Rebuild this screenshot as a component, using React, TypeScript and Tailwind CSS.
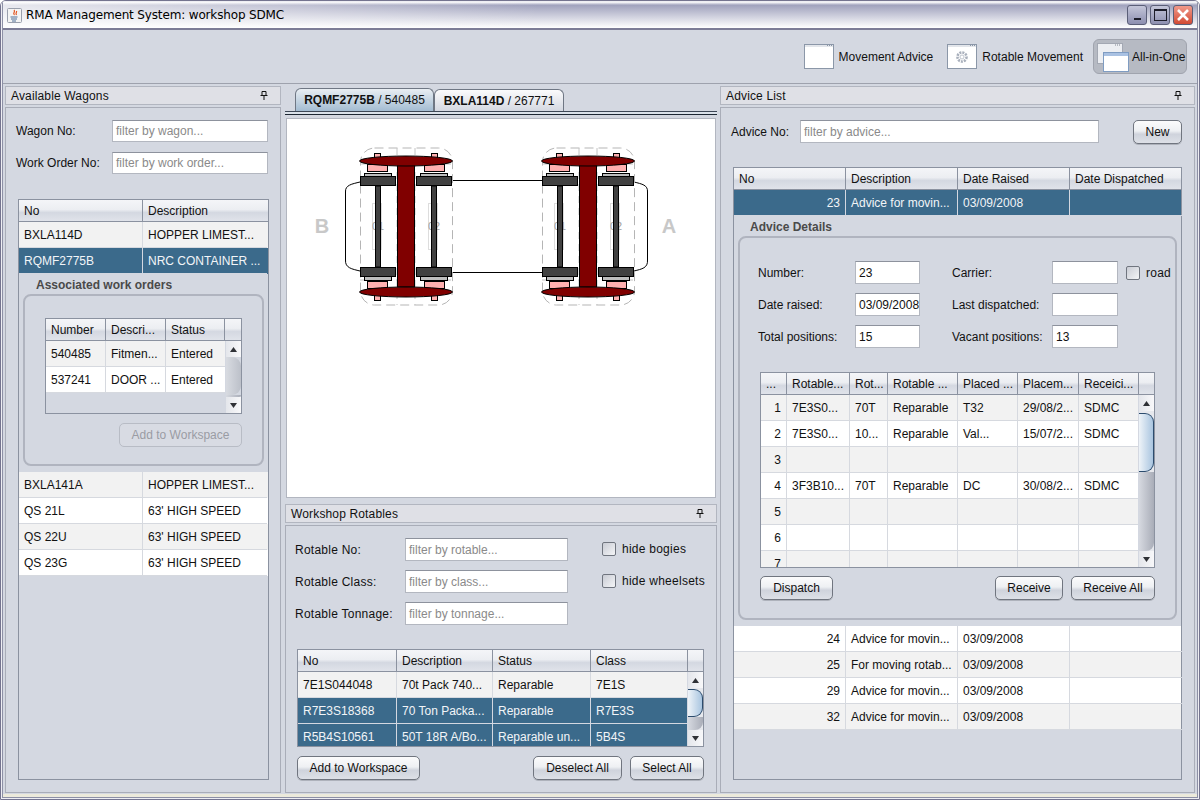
import type { ReactNode } from 'react'

const LIGHT = 'bg-[#f2f2f2]'
const headerBg = 'bg-[linear-gradient(#f4f5f8_0%,#eceef2_45%,#d4d8e1_60%,#e0e3ea_100%)]'
const buttonBg = 'bg-[linear-gradient(#fbfbfc_0%,#eef0f3_45%,#cfd3dc_60%,#dde0e7_100%)]'

type Kind = 'light' | 'white' | 'selected'

function Cells({ cols, cells, kind, height = 'h-[26px]', numeric }: { cols: string; cells: string[]; kind: Kind; height?: string; numeric?: boolean }) {
  const bg = kind === 'selected' ? 'bg-[#3b6a8b] text-[#f2f5f8]' : kind === 'light' ? LIGHT : 'bg-white'
  const line = kind === 'selected' ? 'border-[#d4d8e1]' : 'border-[#d6d9df]'
  return (
    <div className={`grid shrink-0 ${cols} ${height} ${bg}`}>
      {cells.map((cell, i) => (
        <div
          key={i}
          className={`flex h-[26px] items-center overflow-hidden whitespace-nowrap border-b border-r px-[5px] last:border-r-0 ${line} ${numeric && i === 0 ? 'justify-end' : ''}`}
        >
          {cell}
        </div>
      ))}
    </div>
  )
}

function Header({ cols, labels, scrollCorner }: { cols: string; labels: string[]; scrollCorner?: boolean }) {
  return (
    <div className={`grid h-[22px] shrink-0 border-b border-[#8b92a0] ${cols} ${headerBg}`}>
      {labels.map((label, i) => (
        <div key={i} className="flex items-center overflow-hidden whitespace-nowrap border-r border-[#8b92a0] px-[5px] last:border-r-0">
          {label}
        </div>
      ))}
      {scrollCorner && <div />}
    </div>
  )
}

function Arrow({ up }: { up?: boolean }) {
  return (
    <div className="flex h-[16px] shrink-0 items-center justify-center bg-[linear-gradient(90deg,#e4e6eb,#f8f8fa)]">
      <svg width="9" height="7" viewBox="0 0 9 7">
        <path d={up ? 'M4.5 1 L8 6 L1 6 Z' : 'M1 1 L8 1 L4.5 6 Z'} fill="#2f3136" />
      </svg>
    </div>
  )
}

function ScrollBar({ offset, thumb, track }: { offset: string; thumb: string; track: string }) {
  return (
    <div className={`flex w-[16px] shrink-0 flex-col border-l border-[#d4d8e1] ${track}`}>
      <Arrow up />
      <div className={offset} />
      <div className={thumb} />
      <div className="flex-1 rounded-br-[8px] bg-[linear-gradient(90deg,#d6d9e0,#a9adb8)]" />
      <Arrow />
    </div>
  )
}

const blueThumb = 'shrink-0 rounded-r-[9px] border-y border-r border-[#2c4c6e] bg-[linear-gradient(90deg,#eef3f8,#a9c5e0)]'
const greyThumb = 'shrink-0 rounded-r-[9px] bg-[linear-gradient(90deg,#d8dbe1,#bcc0c9)]'

function Field({ placeholder, value, width = 'w-[156px]', height = 'h-[22px]' }: { placeholder?: string; value?: string; width?: string; height?: string }) {
  return (
    <div className={`flex shrink-0 items-center overflow-hidden whitespace-nowrap border border-[#b3b7c0] border-t-[#8d929d] bg-white px-[3px] ${width} ${height} ${placeholder ? 'text-[#8a8a8a]' : ''}`}>
      {placeholder ?? value}
    </div>
  )
}

function Button({ children, width, disabled }: { children: ReactNode; width: string; disabled?: boolean }) {
  return (
    <div
      className={`flex h-[24px] shrink-0 items-center justify-center rounded-[5px] border ${width} ${
        disabled
          ? 'border-[#b8bcc5] bg-[#d8dbe3] text-[#9a9ca3]'
          : `border-[#70757f] shadow-[0_1px_0_#aeb2bb] ${buttonBg}`
      }`}
    >
      {children}
    </div>
  )
}

function DockTitle({ title }: { title: string }) {
  return (
    <div className="flex h-[19px] shrink-0 items-center justify-between border border-[#b2b6c0] bg-[#dfe0e6] pl-[5px] pr-[12px]">
      <span className="tracking-[0.15px]">{title}</span>
      <svg width="8" height="9" viewBox="0 0 8 9">
        <path d="M2 0.5 H6 V4.5 H2 Z M0.5 4.5 H7.5 M4 4.5 V9" fill="none" stroke="#111" />
      </svg>
    </div>
  )
}

function CheckBox({ label, className }: { label: string; className: string }) {
  return (
    <div className={`flex items-center ${className}`}>
      <div className="h-[14px] w-[14px] shrink-0 rounded-[2px] border border-[#70757f] bg-[linear-gradient(135deg,#c9ccd4,#f4f5f7)]" />
      <span className="ml-[6px] whitespace-nowrap tracking-[0.25px]">{label}</span>
    </div>
  )
}

function WindowIcon({ children }: { children?: ReactNode }) {
  return (
    <svg width="30" height="26" viewBox="0 0 30 26" className="shrink-0">
      <rect x="0.5" y="0.5" width="29" height="24" fill="#fff" stroke="#8b97a8" />
      <path d="M1 2 H29" stroke="#c6ccd6" />
      <path d="M23 1.5 H28" stroke="#8b97a8" strokeDasharray="1 1" />
      {children}
    </svg>
  )
}

function AllInOneIcon() {
  return (
    <svg width="33" height="32" viewBox="0 0 33 32" className="shrink-0">
      <rect x="1.5" y="2.5" width="25" height="20" fill="#eceef2" stroke="#a3a8b3" />
      <path d="M19 4 H24" stroke="#7e8490" strokeDasharray="1 1" />
      <rect x="7.5" y="11.5" width="25" height="19" fill="#fff" stroke="#7f9cc2" />
      <rect x="8" y="12" width="24" height="3" fill="#a9c1e2" />
    </svg>
  )
}

// absolute x of each part of the two wheelsets, left bogie
const wheelsets = [
  { label: '01', small: 374, wide: 367, grey: 364, box: 360, axle: 375 },
  { label: '02', small: 431, wide: 424, grey: 420, box: 416, axle: 431 },
]

function Bogie({ x }: { x: number }) {
  const dark = '#414141'
  const stroke = { stroke: '#000', strokeWidth: 1 }
  return (
    <g transform={`translate(${x} 0)`}>
      <rect x="360.5" y="148" width="92" height="157" rx="14" fill="none" stroke="#b5b5b5" strokeDasharray="9 5" />
      <path d="M360 164 H452 M360 280 H452 M397 148 V305 M415 148 V305" fill="none" stroke="#c4c4c4" strokeDasharray="7 5" />
      {wheelsets.map((w) => (
        <g key={w.label}>
          <rect x={w.small + 0.5} y="153.5" width="6" height="6" fill="#ffb0b0" {...stroke} />
          <rect x={w.small + 0.5} y="294.5" width="6" height="6" fill="#ffb0b0" {...stroke} />
          <rect x={w.wide + 0.5} y="164.5" width="20" height="7" fill="#ffb0b0" {...stroke} />
          <rect x={w.wide + 0.5} y="281.5" width="20" height="7" fill="#ffb0b0" {...stroke} />
          <rect x={w.grey + 0.5} y="173.5" width="27" height="3" fill="#bdbdbd" {...stroke} />
          <rect x={w.grey + 0.5} y="276.5" width="27" height="4" fill="#bdbdbd" {...stroke} />
          <rect x={w.axle - 2.5} y="203.5" width="9" height="46" fill="none" stroke="#bbb" strokeDasharray="1 1" />
          <text x={w.axle + 3} y="230" textAnchor="middle" fontSize="11" fill="#a0a0a0" fontFamily="Liberation Sans">
            {w.label}
          </text>
          <rect x={w.box + 0.5} y="176.5" width="35" height="9" fill={dark} {...stroke} />
          <rect x={w.box + 0.5} y="267.5" width="35" height="9" fill={dark} {...stroke} />
          <rect x={w.axle + 0.5} y="186" width="5" height="81" fill={dark} {...stroke} />
        </g>
      ))}
      <rect x="397.5" y="163" width="17" height="124" fill="#800000" {...stroke} />
      <ellipse cx="406" cy="161" rx="46.5" ry="5" fill="#800000" {...stroke} />
      <ellipse cx="406" cy="292" rx="46.5" ry="5" fill="#800000" {...stroke} />
    </g>
  )
}

function WagonDrawing() {
  return (
    <svg viewBox="287 119 428 378" className="h-full w-full">
      <path d="M452 180.5 H542 M452 272.5 H542" stroke="#000" fill="none" />
      <path d="M360 182 C352 184 345 185 345.5 192 V260 C345 268 352 269 360 271" stroke="#000" fill="none" />
      <path d="M634 182 C642 184 648 185 647.5 192 V260 C648 268 642 269 634 271" stroke="#000" fill="none" />
      <Bogie x={0} />
      <Bogie x={182} />
      <text x="322" y="233" textAnchor="middle" fontSize="20" fontWeight="700" fill="#c8c8c8" fontFamily="Liberation Sans">B</text>
      <text x="669" y="233" textAnchor="middle" fontSize="20" fontWeight="700" fill="#c8c8c8" fontFamily="Liberation Sans">A</text>
    </svg>
  )
}

function GroupLabel({ children, className }: { children: string; className: string }) {
  return <div className={`flex h-[20px] items-center pt-[1px] font-bold text-[#4a4a4a] ${className}`}>{children}</div>
}

function AvailableWagons() {
  const cols = 'grid-cols-[124px_124px]'
  const inner = 'grid-cols-[60px_60px_59px]'
  return (
    <section className="flex w-[276px] shrink-0 flex-col gap-[2px]">
      <DockTitle title="Available Wagons" />
      <div className="flex flex-1 flex-col border border-[#a9adb8] pb-[12px] pl-[10px] pr-[11px] pt-[12px]">
        <div className="flex items-center">
          <span className="w-[96px]">Wagon No:</span>
          <Field placeholder="filter by wagon..." />
        </div>
        <div className="mt-[10px] flex items-center">
          <span className="w-[96px]">Work Order No:</span>
          <Field placeholder="filter by work order..." />
        </div>
        <div className="ml-[2px] mt-[25px] flex flex-1 flex-col border border-[#8b92a0]">
          <Header cols={cols} labels={['No', 'Description']} />
          <Cells cols={cols} cells={['BXLA114D', 'HOPPER LIMEST...']} kind="light" />
          <Cells cols={cols} cells={['RQMF2775B', 'NRC CONTAINER ...']} kind="selected" />
          <div className="mx-[4px] flex h-[198px] shrink-0 flex-col pb-[6px]">
            <GroupLabel className="pl-[13px]">Associated work orders</GroupLabel>
            <div className="flex flex-1 flex-col rounded-[8px] border-2 border-[#b0b4bf] pl-[20px] pr-[20px] pt-[22px]">
              <div className="flex h-[96px] shrink-0 flex-col border border-[#8b92a0]">
                <Header cols="grid-cols-[60px_60px_59px_1fr]" labels={['Number', 'Descri...', 'Status']} scrollCorner />
                <div className="flex min-h-0 flex-1">
                  <div className="flex-1">
                    <Cells cols={inner} cells={['540485', 'Fitmen...', 'Entered']} kind="light" />
                    <Cells cols={inner} cells={['537241', 'DOOR ...', 'Entered']} kind="white" />
                  </div>
                  <ScrollBar offset="h-0" thumb={`h-[38px] ${greyThumb}`} track="bg-[#d4d8e1]" />
                </div>
              </div>
              <div className="mt-[9px] flex justify-end">
                <Button width="w-[123px]" disabled>Add to Workspace</Button>
              </div>
            </div>
          </div>
          <Cells cols={cols} cells={['BXLA141A', 'HOPPER LIMEST...']} kind="light" />
          <Cells cols={cols} cells={['QS  21L', "63' HIGH SPEED"]} kind="white" />
          <Cells cols={cols} cells={['QS  22U', "63' HIGH SPEED"]} kind="light" />
          <Cells cols={cols} cells={['QS  23G', "63' HIGH SPEED"]} kind="white" />
        </div>
      </div>
    </section>
  )
}

function WagonTabs() {
  return (
    <div className="flex h-[414px] shrink-0 flex-col">
      <div className="flex h-[26px] shrink-0 items-end border-b border-[#3d4756] pl-[10px]">
        <div className="flex h-[23px] w-[139px] items-center justify-center rounded-t-[6px] border border-b-0 border-[#6f7784] bg-[linear-gradient(#e9eef3,#a3bcd2)]">
          <b>RQMF2775B</b>&nbsp;/ 540485
        </div>
        <div className="flex h-[22px] w-[130px] items-center justify-center rounded-t-[6px] border border-b-0 border-[#6f7784] bg-[linear-gradient(#fbfbfc,#d4d8e1)]">
          <b>BXLA114D</b>&nbsp;/ 267771
        </div>
      </div>
      <div className="h-[3px] shrink-0 border-b border-[#1d2733] bg-[#dbe2ea]" />
      <div className="mx-[1px] mt-[3px] h-[380px] shrink-0 border border-[#b2b6c0] bg-white">
        <WagonDrawing />
      </div>
    </div>
  )
}

function WorkshopRotables() {
  const cols = 'grid-cols-[99px_96px_98px_97px]'
  return (
    <section className="flex flex-1 flex-col gap-[2px]">
      <DockTitle title="Workshop Rotables" />
      <div className="flex flex-1 flex-col border border-[#a9adb8] pb-[12px] pl-[9px] pr-[12px] pt-[12px]">
        <div className="flex">
          <div className="flex w-[273px] flex-col gap-[9px]">
            <div className="flex items-center"><span className="w-[110px] tracking-[0.25px]">Rotable No:</span><Field placeholder="filter by rotable..." width="w-[163px]" height="h-[23px]" /></div>
            <div className="flex items-center"><span className="w-[110px] tracking-[0.25px]">Rotable Class:</span><Field placeholder="filter by class..." width="w-[163px]" height="h-[23px]" /></div>
            <div className="flex items-center"><span className="w-[110px] tracking-[0.25px]">Rotable Tonnage:</span><Field placeholder="filter by tonnage..." width="w-[163px]" height="h-[23px]" /></div>
          </div>
          <div className="ml-[34px] flex flex-col gap-[18px] pt-[4px]">
            <CheckBox label="hide bogies" className="h-[14px]" />
            <CheckBox label="hide wheelsets" className="h-[14px]" />
          </div>
        </div>
        <div className="ml-[2px] mt-[24px] flex h-[98px] shrink-0 flex-col overflow-hidden border border-[#8b92a0]">
          <Header cols="grid-cols-[99px_96px_98px_97px_1fr]" labels={['No', 'Description', 'Status', 'Class']} scrollCorner />
          <div className="flex min-h-0 flex-1">
            <div className="min-w-0 flex-1 overflow-hidden">
              <Cells cols={cols} cells={['7E1S044048', '70t Pack 740...', 'Reparable', '7E1S']} kind="light" />
              <Cells cols={cols} cells={['R7E3S18368', '70 Ton Packa...', 'Reparable', 'R7E3S']} kind="selected" />
              <Cells cols={cols} cells={['R5B4S10561', '50T 18R A/Bo...', 'Reparable un...', '5B4S']} kind="selected" height="h-[23px]" />
            </div>
            <ScrollBar offset="h-[1px]" thumb={`h-[28px] ${blueThumb}`} track="bg-[#e6e8ed]" />
          </div>
        </div>
        <div className="ml-[2px] mt-[9px] flex items-center">
          <Button width="w-[123px]">Add to Workspace</Button>
          <div className="flex-1" />
          <Button width="w-[89px]">Deselect All</Button>
          <div className="w-[8px]" />
          <Button width="w-[74px]">Select All</Button>
        </div>
      </div>
    </section>
  )
}

function AdviceDetails() {
  const inner = 'grid-cols-[26px_63px_38px_70px_60px_61px_60px]'
  const row = (n: string, a = '', b = '', c = '', d = '', e = '', f = '') => [n, a, b, c, d, e, f]
  return (
    <div className="mx-[4px] flex h-[410px] shrink-0 flex-col pb-[6px]">
      <GroupLabel className="pl-[12px]">Advice Details</GroupLabel>
      <div className="flex flex-1 flex-col rounded-[8px] border-2 border-[#b0b4bf] pl-[18px] pr-[5px] pt-[23px]">
        <div className="flex flex-col gap-[9px]">
          <div className="flex items-center">
            <span className="w-[97px] shrink-0">Number:</span>
            <Field value="23" width="w-[65px]" height="h-[23px]" />
            <span className="ml-[32px] w-[100px] shrink-0">Carrier:</span>
            <Field value="" width="w-[66px]" height="h-[23px]" />
            <CheckBox label="road" className="ml-[8px]" />
          </div>
          <div className="flex items-center">
            <span className="w-[97px] shrink-0">Date raised:</span>
            <Field value="03/09/2008" width="w-[65px]" height="h-[23px]" />
            <span className="ml-[32px] w-[100px] shrink-0">Last dispatched:</span>
            <Field value="" width="w-[66px]" height="h-[23px]" />
          </div>
          <div className="flex items-center">
            <span className="w-[97px] shrink-0">Total positions:</span>
            <Field value="15" width="w-[65px]" height="h-[23px]" />
            <span className="ml-[32px] w-[100px] shrink-0">Vacant positions:</span>
            <Field value="13" width="w-[66px]" height="h-[23px]" />
          </div>
        </div>
        <div className="ml-[2px] mt-[24px] flex h-[196px] w-[395px] shrink-0 flex-col overflow-hidden border border-[#8b92a0]">
          <Header cols="grid-cols-[26px_63px_38px_70px_60px_61px_60px_1fr]" labels={['...', 'Rotable...', 'Rot...', 'Rotable ...', 'Placed ...', 'Placem...', 'Receici...']} scrollCorner />
          <div className="flex min-h-0 flex-1">
            <div className="min-w-0 flex-1 overflow-hidden">
              <Cells cols={inner} cells={row('1', '7E3S0...', '70T', 'Reparable', 'T32', '29/08/2...', 'SDMC')} kind="light" numeric />
              <Cells cols={inner} cells={row('2', '7E3S0...', '10...', 'Reparable', 'Val...', '15/07/2...', 'SDMC')} kind="white" numeric />
              <Cells cols={inner} cells={row('3')} kind="light" numeric />
              <Cells cols={inner} cells={row('4', '3F3B10...', '70T', 'Reparable', 'DC', '30/08/2...', 'SDMC')} kind="white" numeric />
              <Cells cols={inner} cells={row('5')} kind="light" numeric />
              <Cells cols={inner} cells={row('6')} kind="white" numeric />
              <Cells cols={inner} cells={row('7')} kind="light" numeric />
            </div>
            <ScrollBar offset="h-[2px]" thumb={`h-[59px] ${blueThumb}`} track="bg-[#e6e8ed]" />
          </div>
        </div>
        <div className="ml-[2px] mt-[8px] flex w-[395px] items-center">
          <Button width="w-[73px]">Dispatch</Button>
          <div className="flex-1" />
          <Button width="w-[68px]">Receive</Button>
          <div className="w-[8px]" />
          <Button width="w-[84px]">Receive All</Button>
        </div>
      </div>
    </div>
  )
}

function AdviceList() {
  const cols = 'grid-cols-[112px_112px_112px_112px]'
  return (
    <section className="ml-[3px] flex w-[475px] shrink-0 flex-col gap-[2px]">
      <DockTitle title="Advice List" />
      <div className="flex flex-1 flex-col border border-[#a9adb8] pb-[12px] pl-[10px] pr-[12px] pt-[12px]">
        <div className="flex items-start">
          <span className="w-[69px] self-center">Advice No:</span>
          <Field placeholder="filter by advice..." width="w-[299px]" height="h-[23px]" />
          <div className="flex-1" />
          <Button width="w-[49px]">New</Button>
        </div>
        <div className="ml-[2px] mt-[23px] flex flex-1 flex-col border border-[#8b92a0]">
          <Header cols={cols} labels={['No', 'Description', 'Date Raised', 'Date Dispatched']} />
          <Cells cols={cols} cells={['23', 'Advice for movin...', '03/09/2008', '']} kind="selected" numeric />
          <AdviceDetails />
          <Cells cols={cols} cells={['24', 'Advice for movin...', '03/09/2008', '']} kind="white" numeric />
          <Cells cols={cols} cells={['25', 'For moving rotab...', '03/09/2008', '']} kind="light" numeric />
          <Cells cols={cols} cells={['29', 'Advice for movin...', '03/09/2008', '']} kind="white" numeric />
          <Cells cols={cols} cells={['32', 'Advice for movin...', '03/09/2008', '']} kind="light" numeric />
        </div>
      </div>
    </section>
  )
}

function WindowButton({ children, className }: { children: ReactNode; className: string }) {
  return <div className={`flex h-[20px] w-[20px] items-center justify-center rounded-[3px] border border-[#5b5f78] ${className}`}>{children}</div>
}

function TitleBar() {
  return (
    <div className="flex h-[28px] shrink-0 items-center border-b-2 border-[#7c7c96] bg-[linear-gradient(90deg,rgba(255,255,255,0.75),rgba(255,255,255,0)_45%),linear-gradient(#ffffff_0%,#a0a2bd_12%,#ffffff_100%)] pl-[4px] pr-[4px]">
      <svg width="15" height="15" viewBox="0 0 15 15" className="mr-[4px] shrink-0">
        <rect x="0.5" y="0.5" width="14" height="14" rx="1" fill="#f4f4f4" stroke="#9aa0ad" />
        <path d="M7 2 C9 4 5 5 7.5 7 M9.5 3 C10 5 8 5 9.5 7" fill="none" stroke="#e2531e" strokeWidth="1.2" />
        <path d="M3.5 9 H10.5 M4 11 H10 M5 13 H9" stroke="#4f6f97" />
      </svg>
      <span className="font-['DejaVu_Sans',sans-serif] text-[12px] tracking-[-0.15px] text-black">RMA Management System: workshop SDMC</span>
      <div className="ml-auto flex gap-[3px]">
        <WindowButton className="bg-[linear-gradient(#c4c6d9,#8d8fb0)]">
          <div className="mt-[8px] h-[2px] w-[7px] bg-[#1d1d2a]" />
        </WindowButton>
        <WindowButton className="bg-[linear-gradient(#c4c6d9,#8d8fb0)]">
          <div className="h-[12px] w-[13px] border border-t-2 border-[#1d1d2a]" />
        </WindowButton>
        <WindowButton className="bg-[linear-gradient(#f0998a,#d24a34)]">
          <svg width="14" height="12" viewBox="0 0 14 12">
            <path d="M2 1 L12 11 M12 1 L2 11" stroke="#fff" strokeWidth="2.6" />
          </svg>
        </WindowButton>
      </div>
    </div>
  )
}

function Toolbar() {
  return (
    <div className="flex h-[54px] shrink-0 items-center justify-end border-b border-[#9ea2ad] pr-[10px]">
      <WindowIcon />
      <span className="ml-[5px]">Movement Advice</span>
      <div className="ml-[14px]">
        <WindowIcon>
          <circle cx="15" cy="13" r="4.5" fill="none" stroke="#a9b0bc" strokeWidth="2.6" strokeDasharray="2 1" />
          <circle cx="15" cy="13" r="2" fill="none" stroke="#c0c5ce" />
        </WindowIcon>
      </div>
      <span className="ml-[5px]">Rotable Movement</span>
      <div className="ml-[10px] flex h-[35px] w-[94px] items-center rounded-[6px] border border-[#a0a4ae] bg-[#b6bac3] pl-[2px]">
        <AllInOneIcon />
        <span className="ml-[3px]">All-in-One</span>
      </div>
    </div>
  )
}

export default function App() {
  return (
    <div className="h-[800px] w-[1200px] overflow-hidden rounded-t-[6px] border border-[#74748f] font-['Liberation_Sans',Arial,sans-serif] text-[12px] leading-none text-[#111]">
      <div className="h-full border-x border-b border-t border-[#eeeef3]">
        <div className="flex h-full flex-col border-x border-b border-[#8d90a6] bg-[#d4d8e1]">
          <TitleBar />
          <Toolbar />
          <main className="flex min-h-0 flex-1 border-b-[3px] border-[#eceadb] pb-[1px] pl-[2px] pt-[2px]">
            <AvailableWagons />
            <div className="ml-[4px] flex w-[432px] shrink-0 flex-col gap-[4px]">
              <WagonTabs />
              <WorkshopRotables />
            </div>
            <AdviceList />
          </main>
        </div>
      </div>
    </div>
  )
}
